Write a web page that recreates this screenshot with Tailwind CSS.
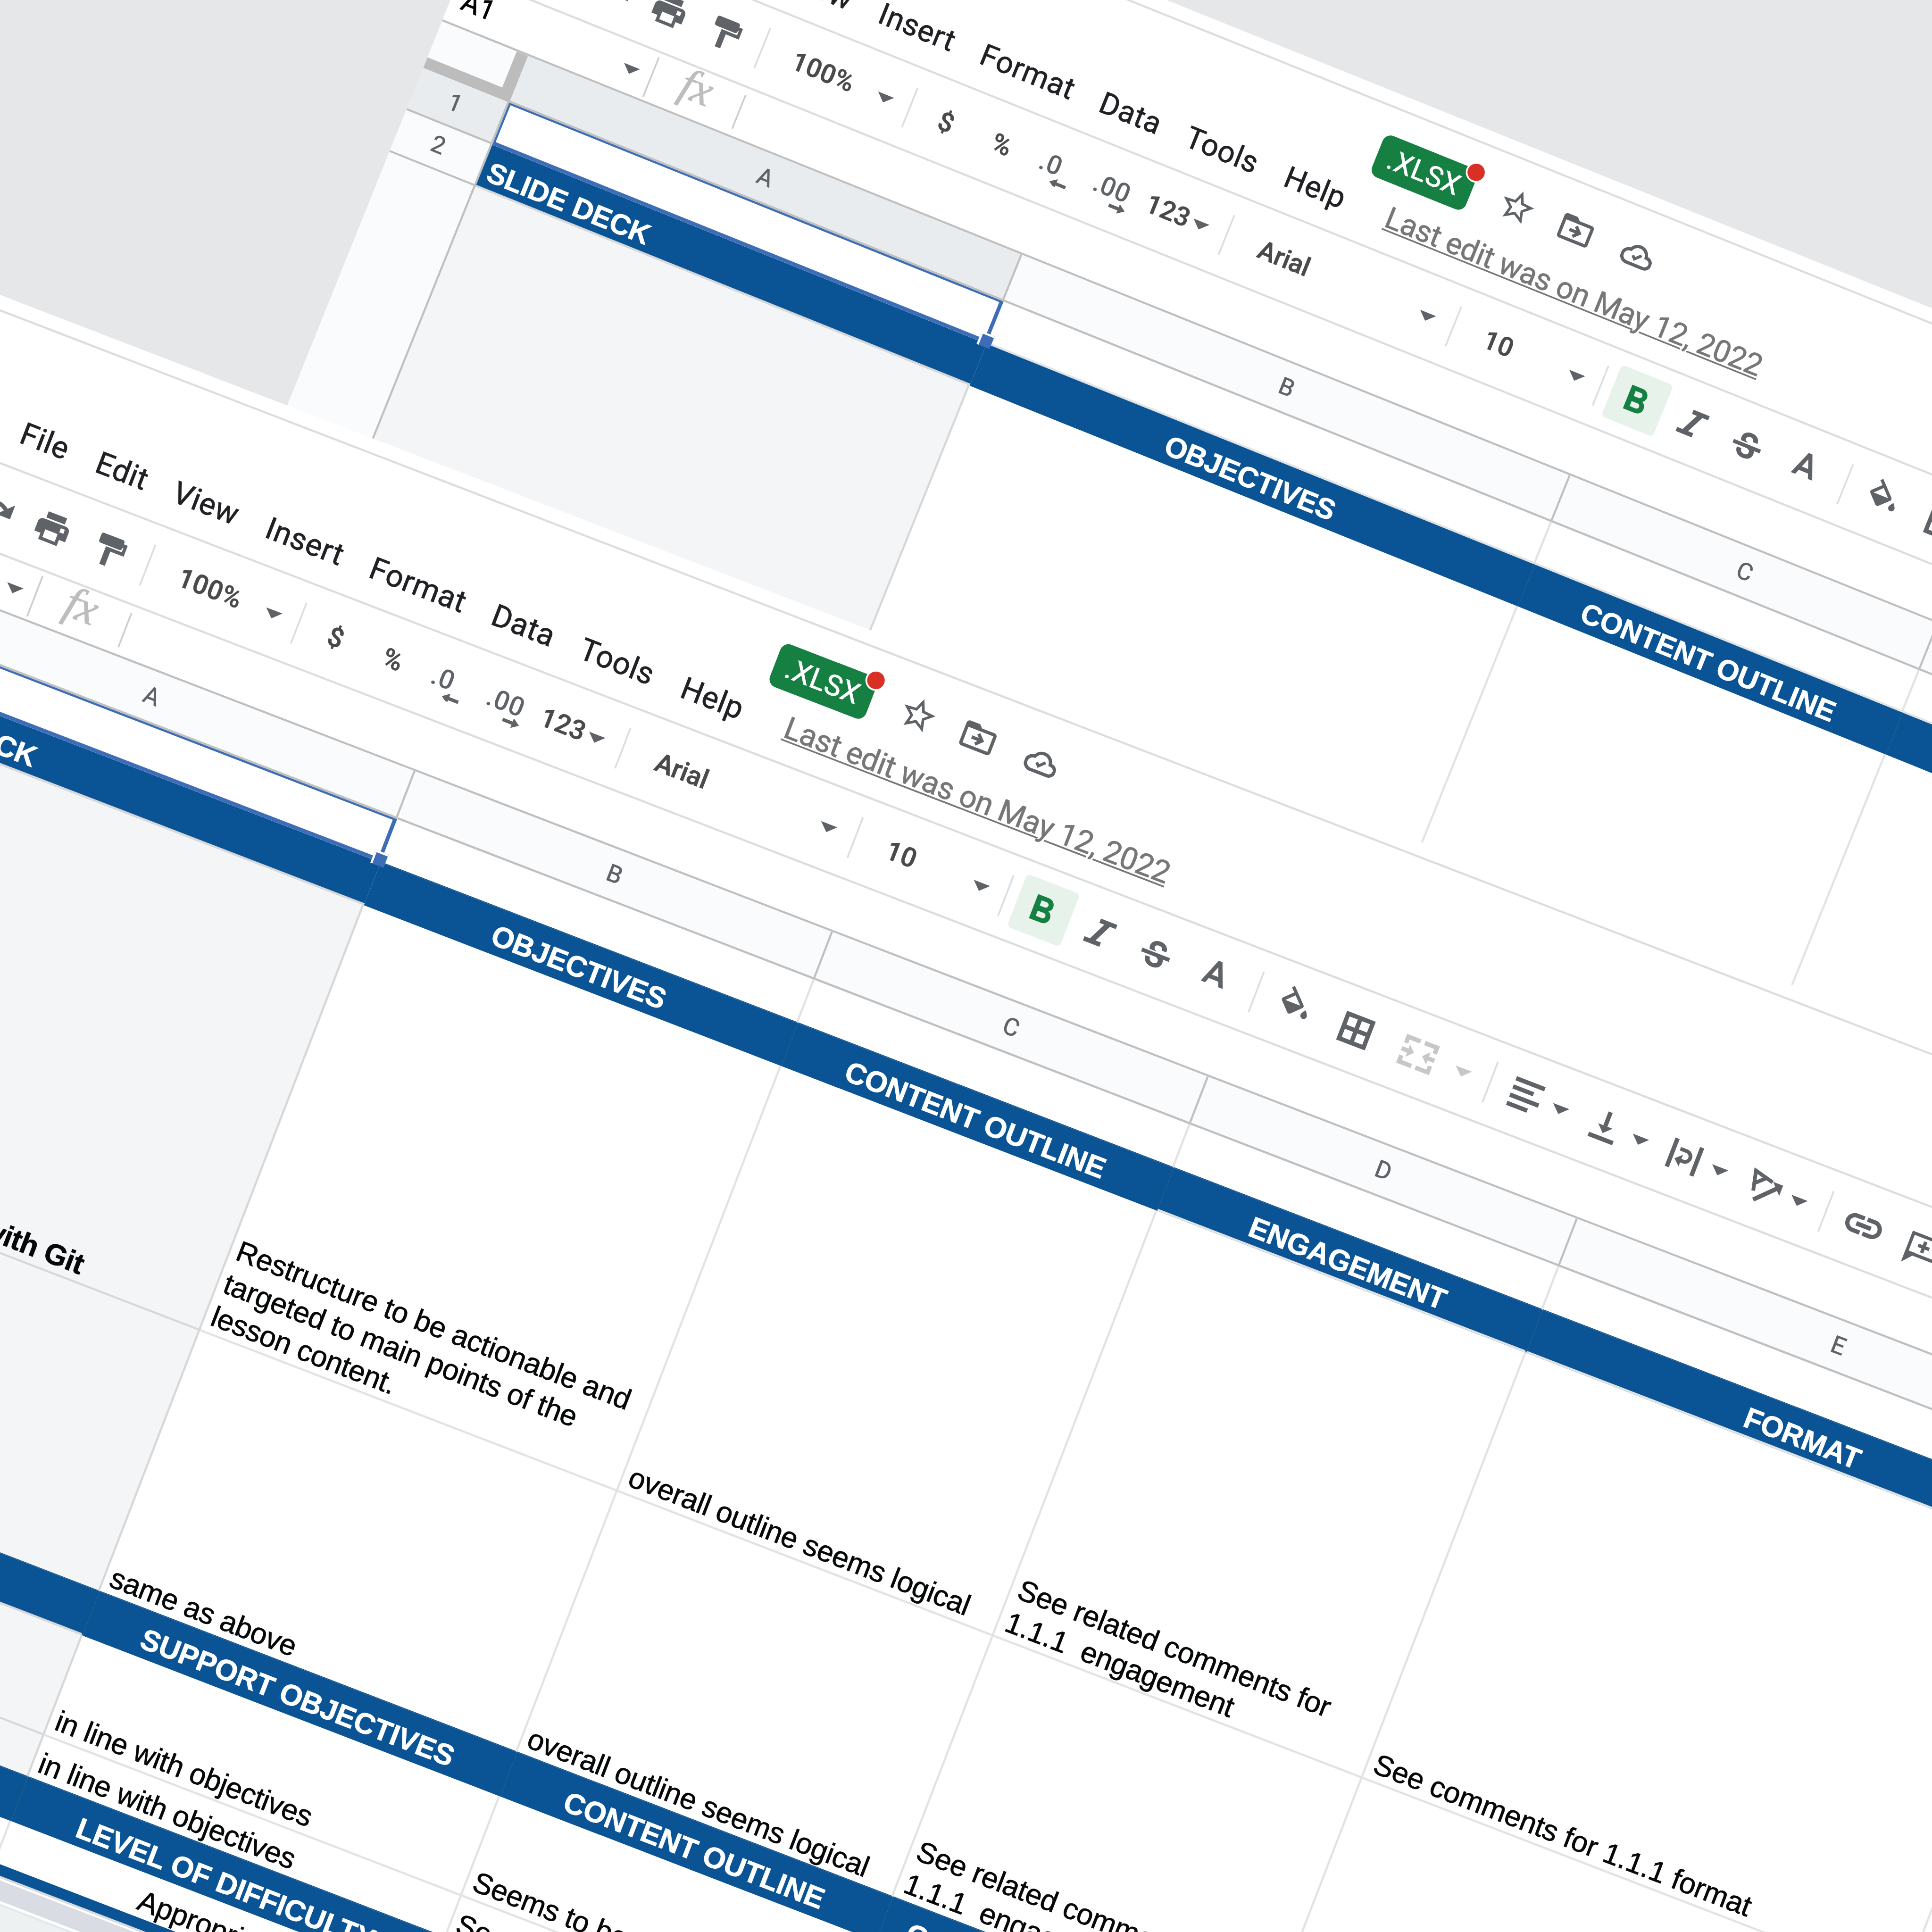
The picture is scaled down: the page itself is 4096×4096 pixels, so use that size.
<!DOCTYPE html>
<html lang="en">
<head>
<meta charset="utf-8">
<title>Spreadsheet review</title>
<script src="https://cdn.jsdelivr.net/npm/@tailwindcss/browser@4"></script>
</head>
<body class="bg-[#e6e7e9]">

<svg class="hidden">
  <symbol id="undo" viewBox="0 0 24 24"><path d="M12.5 8c-2.65 0-5.05.99-6.9 2.6L2 7v9h9l-3.62-3.62c1.39-1.16 3.16-1.88 5.12-1.88 3.54 0 6.55 2.31 7.6 5.5l2.37-.78C21.08 11.03 17.15 8 12.5 8z"/></symbol>
  <symbol id="redo" viewBox="0 0 24 24"><path d="M18.4 10.6C16.55 8.99 14.15 8 11.5 8c-4.65 0-8.58 3.03-9.96 7.22L3.9 16c1.05-3.19 4.05-5.5 7.6-5.5 1.95 0 3.73.72 5.12 1.88L13 16h9V7l-3.6 3.6z"/></symbol>
  <symbol id="print" viewBox="0 0 24 24"><path d="M19 8H5c-1.66 0-3 1.34-3 3v6h4v4h12v-4h4v-6c0-1.66-1.34-3-3-3zm-3 11H8v-5h8v5zm3.2-6.4h-2.6V10h2.6zM18 3H6v4h12V3z"/></symbol>
  <symbol id="paint" viewBox="0 0 18 18"><path d="M3.3 2.3h9.2a1 1 0 0 1 1 1v.7h1.9v5.3H8.9v7H6.2V7.7h7.7V5.6h-.4v.5a1 1 0 0 1-1 1H3.3a1 1 0 0 1-1-1V3.3a1 1 0 0 1 1-1z"/></symbol>
  <symbol id="arrow" viewBox="0 0 41 20"><path d="M0 0h41L20.500 20z"/></symbol>
  <symbol id="bold" viewBox="0 0 24 24"><path d="M15.6 10.790c.97-.67 1.650-1.770 1.650-2.790 0-2.260-1.750-4-4-4H7v14h7.040c2.090 0 3.710-1.700 3.710-3.790 0-1.520-.86-2.820-2.150-3.420zM10 6.500h3c.83 0 1.500.67 1.500 1.500s-.67 1.500-1.500 1.500h-3v-3zm3.500 9H10v-3h3.500c.83 0 1.500.67 1.500 1.500s-.67 1.500-1.500 1.500z"/></symbol>
  <symbol id="italic" viewBox="0 0 92 92"><path d="M36 16h41v10.500H62.500L42.500 68H56v10.500H15V68h13.500l20-41.500H36z"/></symbol>
  <symbol id="strike" viewBox="0 0 24 24"><path transform="translate(0 -.6) scale(1 1.080)" d="M6.850 7.080C6.850 4.370 9.450 3 12.240 3c1.640 0 3 .49 3.900 1.280.77.65 1.460 1.730 1.460 3.240h-3.010c0-.31-.05-.59-.15-.85-.29-.86-1.200-1.280-2.250-1.280-1.860 0-2.340 1.020-2.340 1.700 0 .48.25.88.74 1.210.38.25.77.48 1.410.7H7.390c-.21-.34-.54-.89-.54-1.920zM21 12v-2.200H3V12h9.620c1.150.45 1.960.75 1.960 1.970 0 1-.81 1.670-2.280 1.670-1.540 0-2.930-.54-2.930-2.510H6.400c0 .55.08 1.130.24 1.580.81 2.290 3.290 3.300 5.670 3.300 2.270 0 5.300-.89 5.300-4.050 0-.3-.01-1.160-.48-1.940H21z"/></symbol>
  <symbol id="color" viewBox="0 0 24 24"><path stroke="currentColor" stroke-width=".5" d="M11 3L5.500 17h2.250l1.120-3h6.250l1.120 3h2.250L13 3h-2zm-1.380 9L12 5.670 14.380 12H9.620z"/></symbol>
  <symbol id="fill" viewBox="0 0 24 24"><path d="M16.560 8.940L7.620 0 6.210 1.410l2.380 2.380-5.150 5.150c-.59.59-.59 1.540 0 2.120l5.500 5.500c.29.29.68.44 1.060.44s.77-.15 1.060-.44l5.500-5.500c.59-.58.59-1.530 0-2.120zM5.210 10L10 5.210 14.790 10H5.210zM19 11.500s-2 2.170-2 3.500c0 1.100.9 2 2 2s2-.9 2-2c0-1.330-2-3.500-2-3.500z"/></symbol>
  <symbol id="borders" viewBox="0 0 18 18"><path d="M2 2v14h14V2H2zm6 12H4v-4h4v4zm0-6H4V4h4v4zm6 6h-4v-4h4v4zm0-6h-4V4h4v4z"/></symbol>
  <symbol id="merge" viewBox="0 0 18 18"><path d="M3 6H1V2h7v2H3v2zm7-2V2h7v4h-2V4h-5zm0 10h5v-2h2v4h-7v-2zm-9-2h2v2h5v2H1v-4zm0-4h3V6l3 3-3 3v-2H1V8zm13 2v2l-3-3 3-3v2h3v2h-3z"/></symbol>
  <symbol id="align" viewBox="0 0 18 18"><path d="M2 2h14v2H2zM2 6h10v2H2zM2 10h14v2H2zM2 14h10v2H2z"/></symbol>
  <symbol id="valign" viewBox="0 0 18 18"><path d="M8 2h2v6.700h2.500L9 12.200 5.500 8.700H8zM3 13.800h12v2H3z"/></symbol>
  <symbol id="wrap" viewBox="0 0 18 18"><path d="M2 2.100h2v13.800H2zM14 2.100h2v13.800h-2z"/><path d="M5.900 6.100h3.200a2.500 2.500 0 0 1 0 5H7.500" fill="none" stroke="currentColor" stroke-width="1.700"/><path d="M4.900 11.100l3.100-2.800v5.600z"/></symbol>
  <symbol id="rotate" viewBox="0 0 18 18"><path d="M4.600 12L2.500 3l9 2.300M3.400 9.100l4.700-4.500" fill="none" stroke="currentColor" stroke-width="1.700"/><path d="M6 15.800l8.800-9" fill="none" stroke="currentColor" stroke-width="2"/><path d="M11.600 5h4.900v5z"/></symbol>
  <symbol id="link" viewBox="0 0 24 24"><path d="M3.900 12c0-1.710 1.390-3.100 3.100-3.100h4V7H7c-2.760 0-5 2.240-5 5s2.240 5 5 5h4v-1.900H7c-1.710 0-3.100-1.390-3.100-3.100zM8 13h8v-2H8v2zm9-6h-4v1.900h4c1.710 0 3.100 1.390 3.100 3.100s-1.390 3.100-3.100 3.100h-4V17h4c2.760 0 5-2.240 5-5s-2.240-5-5-5z" stroke="currentColor" stroke-width=".4"/></symbol>
  <symbol id="comment" viewBox="0 0 18 18"><path d="M2.700 16V3.600h13.400v9.200H5.500z" fill="none" stroke="currentColor" stroke-width="1.500"/><path d="M2 12h4.500L2 16.600zM8.500 5.500h1.600v1.900H12V9h-1.900v1.900H8.500V9H6.600V7.400h1.900z"/></symbol>
  <symbol id="star" viewBox="0 0 24 24"><path d="M22 9.240l-7.190-.62L12 2 9.190 8.630 2 9.240l5.460 4.730L5.820 21 12 17.270 18.180 21l-1.630-7.030L22 9.240zM12 15.400l-3.760 2.270 1-4.280-3.320-2.880 4.380-.38L12 6.100l1.710 4.040 4.380.38-3.320 2.880 1 4.280L12 15.400z"/></symbol>
  <symbol id="move" viewBox="0 0 24 24"><path d="M20 6h-8l-2-2H4c-1.100 0-2 .9-2 2v12c0 1.100.9 2 2 2h16c1.100 0 2-.9 2-2V8c0-1.100-.9-2-2-2zm0 12H4V8h16v10zm-7.840-6H8v2h4.160l-1.590 1.590L11.990 17 16 13.010 11.990 9l-1.410 1.410L12.160 12z"/></symbol>
  <symbol id="cloud" viewBox="0 0 24 24"><path stroke="currentColor" stroke-width=".4" d="M19.350 10.040C18.670 6.590 15.640 4 12 4 9.110 4 6.600 5.640 5.350 8.040 2.340 8.360 0 10.910 0 14c0 3.310 2.690 6 6 6h13c2.760 0 5-2.240 5-5 0-2.640-2.050-4.780-4.650-4.960zM19 18H6c-2.210 0-4-1.790-4-4 0-2.050 1.530-3.760 3.560-3.970l1.070-.11.5-.95C8.080 7.140 9.940 6 12 6c2.620 0 4.880 1.860 5.390 4.430l.3 1.500 1.530.11c1.560.1 2.780 1.410 2.780 2.960 0 1.650-1.350 3-3 3z"/><path d="M10.800 15.900l-2.500-2.500 1.200-1.200 1.300 1.300 3.300-3.300 1.200 1.200z" stroke="currentColor" stroke-width=".4"/></symbol>
</svg>

<!-- Menu bar, toolbar and formula bar shared by both windows -->
<template id="chrome">
  <div class="h-[36px] border-b-[5px] border-[#dcdddd] bg-white"></div>
  <div class="flex h-[332px] border-b-[5px] border-[#dadde1] bg-white font-[Roboto,sans-serif] text-[71.7px] leading-[84px] text-[#202124]">
    <nav class="flex h-full items-end pb-[40.5px] pl-[343px] tracking-[1.02px]">
      <span class="w-[188.5px]">File</span>
      <span class="w-[192.5px]">Edit</span>
      <span class="w-[231.5px]">View</span>
      <span class="w-[259.5px]">Insert</span>
      <span class="w-[304.5px]">Format</span>
      <span class="w-[219.5px]">Data</span>
      <span class="w-[253px]">Tools</span>
      <span class="w-[182px]">Help</span>
    </nav>
    <div class="flex flex-col pt-[62px]">
      <div class="flex h-[106px] items-start text-[#5f6368]">
        <div class="relative flex h-[106px] w-[240px] items-center justify-center rounded-[20px] bg-[#158042] pr-[3px] text-[67px] tracking-[0.6px] text-white">.XLSX
          <span class="absolute -top-[18px] -right-[18px] size-[49px] rounded-full border-[4px] border-white bg-[#d93025]"></span>
        </div>
        <svg class="mt-[-1.5px] ml-[67.5px] size-[93px] fill-current"><use href="#star"/></svg>
        <svg class="mt-[-1.5px] ml-[57px] size-[93px] fill-current"><use href="#move"/></svg>
        <svg class="mt-[9px] ml-[72px] size-[78px] fill-current"><use href="#cloud"/></svg>
      </div>
      <a class="mt-[34.5px] ml-[76px] tracking-[-0.3px] whitespace-nowrap text-[#777] underline decoration-[4px] underline-offset-[5px]">Last edit was on May 12, 2022</a>
    </div>
  </div>
  <div class="flex h-[196.5px] items-center border-b-[5px] border-[#dadde1] bg-white font-[Roboto,sans-serif] text-[62px] leading-[72px] font-medium tracking-[0.8px] text-[#4a4a4a] *:shrink-0">
    <svg class="ml-[166px] size-[92px] fill-[#5f6368]"><use href="#undo"/></svg>
    <svg class="ml-[47.7px] size-[92px] fill-[#5f6368]"><use href="#redo"/></svg>
    <svg class="ml-[47.3px] size-[92px] fill-[#5f6368]"><use href="#print"/></svg>
    <svg class="ml-[53px] size-[92px] fill-[#5f6368]"><use href="#paint"/></svg>
    <i class="ml-[44px] h-[101px] w-[4px] bg-[#dadde1]"></i>
    <span class="mb-[3px] ml-[76px] w-[215px]">100%</span>
    <svg class="mt-[4px] h-[20px] w-[41px] fill-[#5f6368]"><use href="#arrow"/></svg>
    <i class="ml-[40.6px] h-[101px] w-[4px] bg-[#dadde1]"></i>
    <span class="ml-[61.4px] w-[60px] text-center">$</span>
    <span class="ml-[82.5px] w-[60px] text-center">%</span>
    <svg class="ml-[63.5px] h-[92px] w-[92px] fill-[#5f6368]" viewBox="0 0 92 92"><text x="4" y="65">.0</text><path d="M43 84l17-12v8h24v8H60v8z"/></svg>
    <svg class="ml-[46px] h-[92px] w-[100px] overflow-visible fill-[#5f6368]" viewBox="0 0 100 92"><text x="4" y="65">.00</text><path d="M97.500 84L80.500 72v8h-24v8h24v8z"/></svg>
    <span class="mb-[3px] ml-[38.5px] w-[116.5px]">123</span>
    <svg class="mt-[4px] h-[20px] w-[41px] fill-[#5f6368]"><use href="#arrow"/></svg>
    <i class="ml-[43.6px] h-[101px] w-[4px] bg-[#dadde1]"></i>
    <span class="ml-[82.4px] w-[408px] tracking-[-0.2px]">Arial</span>
    <svg class="mt-[4px] h-[20px] w-[41px] fill-[#5f6368]"><use href="#arrow"/></svg>
    <i class="ml-[45px] h-[101px] w-[4px] bg-[#dadde1]"></i>
    <span class="mb-[3px] ml-[77px] w-[214px]">10</span>
    <svg class="mt-[4px] h-[20px] w-[41px] fill-[#5f6368]"><use href="#arrow"/></svg>
    <i class="ml-[39.6px] h-[101px] w-[4px] bg-[#dadde1]"></i>
    <div class="ml-[26.4px] flex size-[132px] items-center justify-center rounded-[10px] bg-[#e7f3ea]"><svg class="mt-[8px] mr-[6px] size-[103px] fill-[#158042]"><use href="#bold"/></svg></div>
    <svg class="ml-[30px] size-[92px] fill-[#5f6368]"><use href="#italic"/></svg>
    <svg class="mt-[12px] ml-[47px] size-[92px] fill-[#5f6368]"><use href="#strike"/></svg>
    <svg class="ml-[53px] size-[96px] fill-[#5f6368] text-[#5f6368]"><use href="#color"/></svg>
    <i class="ml-[52.6px] h-[101px] w-[4px] bg-[#dadde1]"></i>
    <svg class="ml-[48px] size-[92px] fill-[#5f6368]"><use href="#fill"/></svg>
    <svg class="ml-[61px] size-[92px] fill-[#5f6368]"><use href="#borders"/></svg>
    <svg class="ml-[63px] size-[92px] fill-[#c6c7c8]"><use href="#merge"/></svg>
    <svg class="mt-[4px] ml-[45px] h-[20px] w-[41px] fill-[#c6c7c8]"><use href="#arrow"/></svg>
    <i class="ml-[46.5px] h-[101px] w-[4px] bg-[#dadde1]"></i>
    <svg class="ml-[41.3px] size-[92px] fill-[#5f6368]"><use href="#align"/></svg>
    <svg class="mt-[4px] ml-[19px] h-[20px] w-[41px] fill-[#5f6368]"><use href="#arrow"/></svg>
    <svg class="ml-[45.5px] size-[92px] fill-[#5f6368]"><use href="#valign"/></svg>
    <svg class="mt-[4px] ml-[20.5px] h-[20px] w-[41px] fill-[#5f6368]"><use href="#arrow"/></svg>
    <svg class="ml-[44.5px] size-[92px] fill-[#5f6368] text-[#5f6368]"><use href="#wrap"/></svg>
    <svg class="mt-[4px] ml-[20.5px] h-[20px] w-[41px] fill-[#5f6368]"><use href="#arrow"/></svg>
    <svg class="ml-[46.5px] size-[92px] fill-[#5f6368] text-[#5f6368]"><use href="#rotate"/></svg>
    <svg class="mt-[4px] ml-[18.5px] h-[20px] w-[41px] fill-[#5f6368]"><use href="#arrow"/></svg>
    <i class="ml-[45.5px] h-[101px] w-[4px] bg-[#dadde1]"></i>
    <svg class="ml-[40px] size-[104px] fill-[#5f6368] text-[#5f6368]"><use href="#link"/></svg>
    <svg class="ml-[49px] size-[92px] fill-[#5f6368] text-[#5f6368]"><use href="#comment"/></svg>
  </div>
  <div class="flex h-[123.3px] items-start border-b-[5px] border-[#c0c0c0] bg-white">
    <span class="mt-[19px] ml-[27px] w-[409.5px] font-[Roboto,sans-serif] text-[66px] leading-[78px] text-black">A1</span>
    <svg class="mt-[53px] h-[20px] w-[41px] fill-[#5f6368]"><use href="#arrow"/></svg>
    <i class="mt-[10px] ml-[29.500px] h-[101px] w-[4px] bg-[#cdcdcd]"></i>
    <span class="mt-[-9.5px] ml-[71px] w-[149px] font-['Liberation_Serif',serif] text-[104px] leading-[104px] text-[#bdbdbd] italic [-webkit-text-stroke:1.5px]">fx</span>
    <i class="mt-[16px] h-[86px] w-[4px] bg-[#cdcdcd]"></i>
  </div>
</template>

<main class="relative h-[4096px] w-[4096px] overflow-hidden bg-[#e6e7e9] font-['Liberation_Sans',sans-serif] text-[68.27px] leading-[81.2px] tracking-[-0.25px] [-webkit-text-stroke:0.9px]">

  <!-- Back window -->
  <section class="absolute top-0 left-0 h-[3600px] w-[5800px] origin-top-left bg-white [transform:matrix(0.82972,0.33409,-0.33409,0.82972,1166.9,-525.7)]">
    <div data-chrome></div>
    <div class="grid h-[119.7px] grid-cols-[219.5px_1263.5px_1401.4px_939.3px_920px_1056.3px] font-[Roboto,sans-serif] text-[56.3px] text-[#5f6368]">
      <div class="border-r-[29px] border-b-[27px] border-[#bcbcbc] bg-[#fafbfd]"></div>
      <div class="flex items-center justify-center border-r-[5px] border-b-[5px] border-[#c0c0c0] bg-[#e8ecef]">A</div>
      <div class="flex items-center justify-center border-r-[5px] border-b-[5px] border-[#c0c0c0] bg-[#fafbfd]">B</div>
      <div class="flex items-center justify-center border-r-[5px] border-b-[5px] border-[#c0c0c0] bg-[#fafbfd]">C</div>
      <div class="flex items-center justify-center border-r-[5px] border-b-[5px] border-[#c0c0c0] bg-[#fafbfd]">D</div>
      <div class="border-b-[5px] border-[#c0c0c0] bg-[#fafbfd]"></div>
    </div>
    <div class="grid h-[107.5px] grid-cols-[219.5px_1263.5px_1401.4px_939.3px_920px_1056.3px]">
      <div class="flex items-center justify-center border-r-[5px] border-b-[5px] border-[#c0c0c0] bg-[#e8ecef] pr-3 pb-[5px] font-[Roboto,sans-serif] text-[56.3px] text-[#5f6368]">1</div>
      <div class="relative z-10 border-t-[5px] border-r-[9px] border-b-[9px] border-l-[5px] border-[#3d6db6] bg-white">
        <span class="absolute -right-[20px] -bottom-[18px] size-[33px] border-t-[5px] border-l-[5px] border-white bg-[#3d6db6]"></span>
      </div>
      <div class="border-r-[5px] border-b-[5px] border-[#e2e3e4]"></div>
      <div class="border-r-[5px] border-b-[5px] border-[#e2e3e4]"></div>
      <div class="border-r-[5px] border-b-[5px] border-[#e2e3e4]"></div>
      <div class="border-b-[5px] border-[#e2e3e4]"></div>
    </div>
    <div class="grid h-[107.5px] grid-cols-[219.5px_1263.5px_1401.4px_939.3px_920px_1056.3px] font-bold text-white">
      <div class="flex items-center justify-center border-r-[5px] border-b-[5px] border-[#c0c0c0] bg-[#fafbfd] pr-3 pb-[5px] font-[Roboto,sans-serif] text-[56.3px] font-normal text-[#5f6368]">2</div>
      <div class="flex items-end border-b-[5px] border-[#d8d8d8] bg-[#0a5495] pl-[15px]">SLIDE DECK</div>
      <div class="flex items-end justify-center border-r-[5px] border-[#0d5490] bg-[#0a5495] pb-[5px]">OBJECTIVES</div>
      <div class="flex items-end justify-center border-r-[5px] border-[#0d5490] bg-[#0a5495] pb-[5px]">CONTENT OUTLINE</div>
      <div class="flex items-end justify-center border-r-[5px] border-[#0d5490] bg-[#0a5495] pb-[5px]">ENGAGEMENT</div>
      <div class="bg-[#0a5495]"></div>
    </div>
    <div class="grid h-[2400px] grid-cols-[219.5px_1263.5px_1401.4px_939.3px_920px_1056.3px]">
      <div class="border-r-[5px] border-[#c0c0c0] bg-[#fafbfd]"></div>
      <div class="border-r-[5px] border-[#d8d8d8] bg-[#f4f5f7]"></div>
      <div class="border-r-[5px] border-[#e2e3e4]"></div>
      <div class="border-r-[5px] border-[#e2e3e4]"></div>
      <div class="border-r-[5px] border-[#e2e3e4]"></div>
      <div></div>
    </div>
  </section>

  <!-- Front window -->
  <section class="absolute top-0 left-0 h-[4200px] w-[5800px] origin-top-left bg-white [transform:matrix(0.84941,0.32712,-0.32712,0.84941,-153.7,566.1)]">
    <div data-chrome></div>
    <div class="grid h-[119.7px] grid-cols-[219.5px_1263.5px_1042px_938px_920.5px_1350.5px] font-[Roboto,sans-serif] text-[56.3px] text-[#5f6368]">
      <div class="border-r-[29px] border-b-[27px] border-[#bcbcbc] bg-[#fafbfd]"></div>
      <div class="flex items-center justify-center border-r-[5px] border-b-[5px] border-[#c0c0c0] bg-[#fafbfd] pr-[4px]">A</div>
      <div class="flex items-center justify-center border-r-[5px] border-b-[5px] border-[#c0c0c0] bg-[#fafbfd]">B</div>
      <div class="flex items-center justify-center border-r-[5px] border-b-[5px] border-[#c0c0c0] bg-[#fafbfd]">C</div>
      <div class="flex items-center justify-center border-r-[5px] border-b-[5px] border-[#c0c0c0] bg-[#fafbfd]">D</div>
      <div class="flex items-center justify-center border-r-[5px] border-b-[5px] border-[#c0c0c0] bg-[#fafbfd]">E</div>
    </div>
    <div class="grid h-[107.5px] grid-cols-[219.5px_1263.5px_1042px_938px_920.5px_1350.5px]">
      <div class="flex items-center justify-center border-r-[5px] border-b-[5px] border-[#c0c0c0] bg-[#e8ecef] font-[Roboto,sans-serif] text-[56.3px] text-[#5f6368]">1</div>
      <div class="relative z-10 border-t-[5px] border-r-[9px] border-b-[9px] border-l-[5px] border-[#3d6db6] bg-white">
        <span class="absolute -right-[20px] -bottom-[18px] size-[33px] border-t-[5px] border-l-[5px] border-white bg-[#3d6db6]"></span>
      </div>
      <div class="border-r-[5px] border-b-2 border-r-[#e2e3e4] border-b-[#12518a]"></div>
      <div class="border-r-[5px] border-b-2 border-r-[#e2e3e4] border-b-[#12518a]"></div>
      <div class="border-r-[5px] border-b-2 border-r-[#e2e3e4] border-b-[#12518a]"></div>
      <div class="border-r-[5px] border-b-2 border-r-[#e2e3e4] border-b-[#12518a]"></div>
    </div>
    <div class="grid h-[107.5px] grid-cols-[219.5px_1263.5px_1042px_938px_920.5px_1350.5px] font-bold text-white">
      <div class="border-r-[5px] border-b-[5px] border-[#c0c0c0] bg-[#fafbfd]"></div>
      <div class="flex items-end border-b-[5px] border-[#d8d8d8] bg-[#0a5495] pl-[15px]">SLIDE DECK</div>
      <div class="flex items-end justify-center border-r-[5px] border-[#0d5490] bg-[#0a5495] pb-[5px]">OBJECTIVES</div>
      <div class="flex items-end justify-center border-r-[5px] border-[#0d5490] bg-[#0a5495] pb-[5px]">CONTENT OUTLINE</div>
      <div class="flex items-end justify-center border-r-[5px] border-b-[5px] border-r-[#0d5490] border-b-[#e2e3e4] bg-[#0a5495]">ENGAGEMENT</div>
      <div class="flex items-end justify-center border-b-[5px] border-b-[#e2e3e4] bg-[#0a5495] pr-[6px]">FORMAT</div>
    </div>
    <div class="grid h-[1062.5px] grid-cols-[219.5px_1263.5px_1042px_938px_920.5px_1350.5px] text-[#050708]">
      <div class="border-r-[5px] border-b-[5px] border-[#c0c0c0] bg-[#fafbfd]"></div>
      <div class="flex items-end overflow-hidden border-r-[5px] border-b-[5px] border-[#d8d8d8] bg-[#f4f5f7] pl-[198px] font-bold">Getting Started with Git</div>
      <div class="flex items-end overflow-hidden border-r-[5px] border-b-[5px] border-[#e2e3e4] pl-[14px] whitespace-nowrap">Restructure to be actionable and<br>targeted to main points of the<br>lesson content.</div>
      <div class="flex items-end overflow-hidden border-r-[5px] border-b-[5px] border-[#e2e3e4] pl-[14px]">overall outline seems logical</div>
      <div class="flex items-end overflow-hidden border-r-[5px] border-b-[5px] border-[#e2e3e4] pl-[16px] whitespace-nowrap"><p>See related comments for<br>1.1.1&nbsp; engagement</p></div>
      <div class="flex items-end overflow-hidden border-r-[5px] border-b-[5px] border-[#e2e3e4] pl-[15px] tracking-normal">See comments for 1.1.1 format</div>
    </div>
    <div class="grid h-[650.3px] grid-cols-[219.5px_1263.5px_1042px_938px_920.5px_1350.5px] text-[#050708]">
      <div class="border-r-[5px] border-b-[5px] border-[#c0c0c0] bg-[#fafbfd]"></div>
      <div class="flex items-end justify-end overflow-hidden border-r-[5px] border-b-2 border-r-[#d8d8d8] border-b-[#12518a] bg-[#f4f5f7] pr-[259px]">Working with a remote</div>
      <div class="flex items-end overflow-hidden border-r-[5px] border-b-2 border-r-[#e2e3e4] border-b-[#12518a] pl-[13px]">same as above</div>
      <div class="flex items-end overflow-hidden border-r-[5px] border-b-2 border-r-[#e2e3e4] border-b-[#12518a] pl-[13px]">overall outline seems logical</div>
      <div class="flex items-end overflow-hidden border-r-[5px] border-b-2 border-r-[#e2e3e4] border-b-[#12518a] pl-[15px] whitespace-nowrap"><p>See related comments for<br>1.1.1&nbsp; engagement</p></div>
      <div class="border-r-[5px] border-[#e2e3e4]"></div>
    </div>
    <div class="grid h-[109.7px] grid-cols-[219.5px_1263.5px_1042px_938px_920.5px_1350.5px] font-bold text-white">
      <div class="border-r-[5px] border-b-[5px] border-[#c0c0c0] bg-[#fafbfd]"></div>
      <div class="border-r-[5px] border-b-[5px] border-r-[#0d5490] border-b-[#d8d8d8] bg-[#0a5495]"></div>
      <div class="flex items-end justify-center border-r-[5px] border-[#0d5490] bg-[#0a5495] pb-[5px] whitespace-nowrap">SUPPORT OBJECTIVES</div>
      <div class="flex items-end justify-center border-r-[5px] border-[#0d5490] bg-[#0a5495] pb-[5px] whitespace-nowrap">CONTENT OUTLINE</div>
      <div class="flex items-end justify-center border-r-[5px] border-[#0d5490] bg-[#0a5495] pb-[5px] whitespace-nowrap">COURSE ENGAGEMENT</div>
      <div class="bg-[#0a5495]"></div>
    </div>
    <div class="grid h-[250px] grid-cols-[219.5px_1263.5px_1042px_938px_920.5px_1350.5px] text-[#050708]">
      <div class="border-r-[5px] border-b-[5px] border-[#c0c0c0] bg-[#fafbfd]"></div>
      <div class="border-r-[5px] border-b-[5px] border-[#d8d8d8] bg-[#f4f5f7]"></div>
      <div class="flex items-end overflow-hidden border-r-[5px] border-b-[5px] border-[#e2e3e4] pl-[14px]">in line with objectives</div>
      <div class="flex items-end overflow-hidden border-r-[5px] border-b-[5px] border-[#e2e3e4] pl-[14px]">Seems to be in line</div>
      <div class="border-r-[5px] border-b-[5px] border-[#e2e3e4]"></div>
      <div></div>
    </div>
    <div class="grid h-[103.500px] grid-cols-[219.5px_1263.5px_1042px_938px_920.5px_1350.5px] text-[#050708]">
      <div class="border-r-[5px] border-b-[5px] border-[#c0c0c0] bg-[#fafbfd]"></div>
      <div class="border-r-[5px] border-b-2 border-r-[#d8d8d8] border-b-[#12518a] bg-[#f4f5f7]"></div>
      <div class="flex items-end overflow-hidden border-r-[5px] border-b-2 border-r-[#e2e3e4] border-b-[#12518a] pl-[13px]">in line with objectives</div>
      <div class="flex items-end overflow-hidden border-r-[5px] border-b-2 border-r-[#e2e3e4] border-b-[#12518a] pl-[13px]">Seems to be in line</div>
      <div class="border-r-[5px] border-[#e2e3e4]"></div>
      <div></div>
    </div>
    <div class="grid h-[109.3px] grid-cols-[219.5px_1263.5px_1042px_938px_920.5px_1350.5px] font-bold text-white">
      <div class="border-r-[5px] border-b-[5px] border-[#c0c0c0] bg-[#fafbfd]"></div>
      <div class="border-r-[5px] border-[#0d5490] bg-[#0a5495]"></div>
      <div class="flex items-end justify-center border-r-[5px] border-[#0d5490] bg-[#0a5495] pb-[3px] whitespace-nowrap">LEVEL OF DIFFICULTY</div>
      <div class="border-r-[5px] border-[#0d5490] bg-[#0a5495]"></div>
      <div class="bg-[#0a5495]"></div>
      <div class="bg-[#0a5495]"></div>
    </div>
    <div class="grid h-[103px] grid-cols-[219.5px_1263.5px_1042px_938px_920.5px_1350.5px] text-[#050708]">
      <div class="border-r-[5px] border-[#c0c0c0] bg-[#fafbfd]"></div>
      <div class="border-r-[5px] border-[#e2e3e4]"></div>
      <div class="flex items-end justify-center overflow-hidden border-r-[5px] border-[#e2e3e4]">Appropriate</div>
      <div class="border-r-[5px] border-[#e2e3e4]"></div>
      <div></div>
      <div></div>
    </div>
    <div class="h-[30.5px] border-b-[5px] border-[#d9dada] bg-[#0a5495]"></div>
    <div class="h-[50px] border-t-[5px] border-white bg-[#d9dce2]"></div>
    <div class="h-[11px] border-t-[6px] border-white bg-[#e3e6ea]"></div>
    <div class="h-[600px] bg-[#edf1f2]"></div>
  </section>
</main>

<script>
  const chrome = document.getElementById('chrome');
  document.querySelectorAll('[data-chrome]').forEach(slot => slot.append(chrome.content.cloneNode(true)));
</script>
</body>
</html>
